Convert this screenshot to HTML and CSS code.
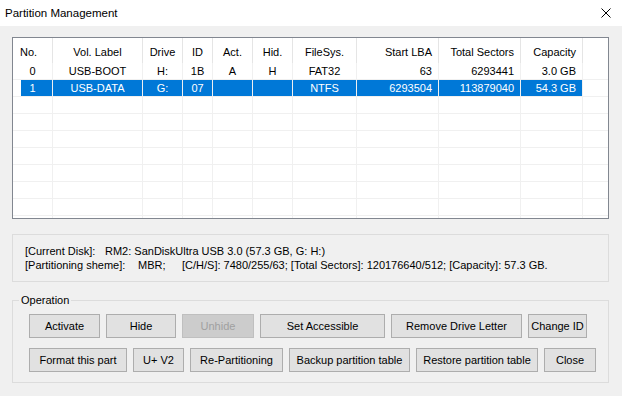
FILE: index.html
```html
<!DOCTYPE html>
<html>
<head>
<meta charset="utf-8" />
<title>Partition Management</title>
	<link rel="stylesheet" href="styles.css">
</head>

<body>
	<div class="titlebar">
		<span class="title">Partition Management</span>
		<svg class="close" width="10" height="10" viewBox="0 0 10 10">
			<path d="M0.5 0.5 L9.5 9.5 M9.5 0.5 L0.5 9.5" stroke="#000" stroke-width="1" fill="none" />
		</svg>
	</div>

	<div class="content">
		<div class="list">
			<table class="grid">
				<colgroup>
					<col class="c-no" /><col class="c-label" /><col class="c-drive" /><col class="c-id" />
					<col class="c-act" /><col class="c-hid" /><col class="c-fs" /><col class="c-lba" />
					<col class="c-total" /><col class="c-cap" /><col class="c-rest" />
				</colgroup>
				<thead>
					<tr>
						<th class="left">No.</th>
						<th>Vol. Label</th>
						<th>Drive</th>
						<th>ID</th>
						<th>Act.</th>
						<th>Hid.</th>
						<th>FileSys.</th>
						<th class="right">Start LBA</th>
						<th class="right">Total Sectors</th>
						<th class="right">Capacity</th>
						<th class="rest"></th>
					</tr>
				</thead>
				<tbody>
					<tr>
						<td>0</td><td>USB-BOOT</td><td>H:</td><td>1B</td><td>A</td><td>H</td><td>FAT32</td>
						<td class="right">63</td><td class="right">6293441</td><td class="right">3.0 GB</td><td class="rest"></td>
					</tr>
					<tr class="selected">
						<td class="first">1</td><td>USB-DATA</td><td>G:</td><td>07</td><td></td><td></td><td>NTFS</td>
						<td class="right">6293504</td><td class="right">113879040</td><td class="right">54.3 GB</td><td class="rest"></td>
					</tr>
					<tr><td></td><td></td><td></td><td></td><td></td><td></td><td></td><td></td><td></td><td></td><td class="rest"></td></tr>
					<tr><td></td><td></td><td></td><td></td><td></td><td></td><td></td><td></td><td></td><td></td><td class="rest"></td></tr>
					<tr><td></td><td></td><td></td><td></td><td></td><td></td><td></td><td></td><td></td><td></td><td class="rest"></td></tr>
					<tr><td></td><td></td><td></td><td></td><td></td><td></td><td></td><td></td><td></td><td></td><td class="rest"></td></tr>
					<tr><td></td><td></td><td></td><td></td><td></td><td></td><td></td><td></td><td></td><td></td><td class="rest"></td></tr>
					<tr><td></td><td></td><td></td><td></td><td></td><td></td><td></td><td></td><td></td><td></td><td class="rest"></td></tr>
					<tr><td></td><td></td><td></td><td></td><td></td><td></td><td></td><td></td><td></td><td></td><td class="rest"></td></tr>
					<tr><td></td><td></td><td></td><td></td><td></td><td></td><td></td><td></td><td></td><td></td><td class="rest"></td></tr>
				</tbody>
			</table>
		</div>

		<div class="info">
			<div><span class="key-disk">[Current Disk]:</span>RM2: SanDiskUltra USB 3.0 (57.3 GB, G: H:)</div>
			<div><span class="key-scheme">[Partitioning sheme]:</span><span class="key-mbr">MBR;</span>[C/H/S]: 7480/255/63; [Total Sectors]: 120176640/512; [Capacity]: 57.3 GB.</div>
		</div>

		<fieldset class="operation">
			<legend>Operation</legend>
			<div class="row">
				<button class="btn-activate">Activate</button>
				<button class="btn-hide">Hide</button>
				<button class="btn-unhide" disabled>Unhide</button>
				<button class="btn-access">Set Accessible</button>
				<button class="btn-remove">Remove Drive Letter</button>
				<button class="btn-change">Change ID</button>
			</div>
			<div class="row row-second">
				<button class="btn-format">Format this part</button>
				<button class="btn-uv">U+ V2</button>
				<button class="btn-repart">Re-Partitioning</button>
				<button class="btn-backup">Backup partition table</button>
				<button class="btn-restore">Restore partition table</button>
				<button class="btn-close">Close</button>
			</div>
		</fieldset>
	</div>
</body>
</html>
```

FILE: styles.css
```css
body {
	margin: 0;
	background-color: #f0f0f0;
	font: normal 11px "Liberation Sans", Arial, sans-serif;
	color: #000;
}

/* title bar */
.titlebar {
	height: 26px;
	background-color: #fff;
	display: flex;
	align-items: center;
	justify-content: space-between;
	padding: 0 11px 0 5px;
}
.title {
	font-size: 11.5px;
}
.close {
	display: block;
}

.content {
	padding: 11px 13px 0 12px;
}

/* partition list */
.list {
	border: 1px solid #828790;
	background-color: #fff;
	height: 180px;
	overflow: hidden;
}
.grid {
	border-collapse: separate;
	border-spacing: 0;
	table-layout: fixed;
	width: 595px;
}
.c-no { width: 40px; }
.c-label { width: 90px; }
.c-drive { width: 40px; }
.c-id { width: 30px; }
.c-act { width: 40px; }
.c-hid { width: 40px; }
.c-fs { width: 64px; }
.c-lba { width: 82px; }
.c-total { width: 82px; }
.c-cap { width: 62px; }
.c-rest { width: 25px; }

.grid th {
	height: 25px;
	padding: 2px 0 0 0;
	box-sizing: border-box;
	font-weight: normal;
	text-align: center;
	border-right: 1px solid #e5e5e5;
	white-space: nowrap;
}
.grid td {
	height: 16px;
	padding: 0;
	line-height: 16px;
	text-align: center;
	border-right: 1px solid #f0f0f0;
	border-bottom: 1px solid #f0f0f0;
	white-space: nowrap;
}
.grid th.left {
	text-align: left;
	padding-left: 7px;
}
.grid .right {
	text-align: right;
	padding-right: 6px;
}
.grid .rest {
	border-right: none;
}
.selected td {
	background-color: #0078d7;
	color: #fff;
}
.selected td.first {
	background: linear-gradient(to right, #fff 8px, #0078d7 8px);
}
.selected td.rest {
	background-color: #fff;
}

/* disk info */
.info {
	margin-top: 15px;
	border: 1px solid #dcdcdc;
	padding: 9px 12px;
	line-height: 14px;
	white-space: nowrap;
}
.key-disk {
	display: inline-block;
	width: 80px;
}
.key-scheme {
	display: inline-block;
	width: 113px;
}
.key-mbr {
	display: inline-block;
	width: 44px;
}

/* operation group */
.operation {
	margin: 11px 0 0 0;
	border: 1px solid #dcdcdc;
	padding: 7px 10px 10px 16px;
	min-width: 0;
}
.operation legend {
	padding: 0 2px;
	margin-left: -10px;
	line-height: 14px;
}
.row {
	display: flex;
	gap: 6px;
}
.row-second {
	margin-top: 10px;
}
.row button {
	box-sizing: border-box;
	height: 24px;
	padding: 0;
	border: 1px solid #adadad;
	background-color: #e1e1e1;
	font: inherit;
	color: #000;
	white-space: nowrap;
}
.row .btn-unhide {
	background-color: #cccccc;
	border-color: #bfbfbf;
	color: #a0a0a0;
}
.btn-activate { width: 71px; }
.btn-hide { width: 70px; }
.btn-unhide { width: 72px; }
.btn-access { width: 125px; }
.btn-remove { width: 131px; }
.btn-change { width: 59px; }
.btn-format { width: 98px; }
.btn-uv { width: 51px; }
.btn-repart { width: 93px; }
.btn-backup { width: 121px; }
.btn-restore { width: 122px; }
.btn-close { width: 52px; }
```
